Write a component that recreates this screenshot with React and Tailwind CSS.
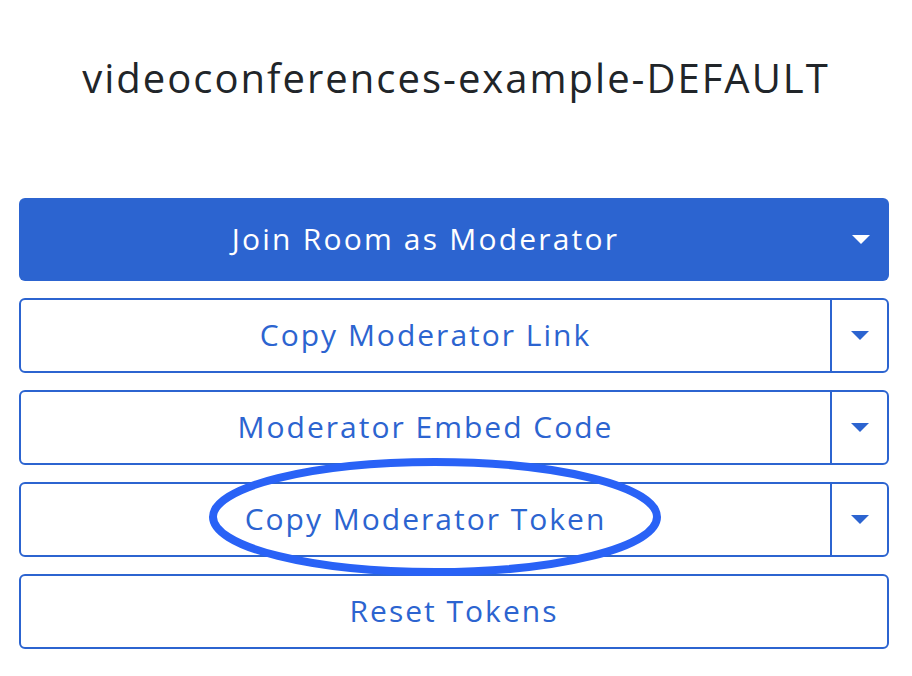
import React from 'react';

const blue = '#2c64d0';

function Caret({ color }) {
    return (
        <svg width="18" height="10" viewBox="0 0 18 10">
            <path d="M0 0 L18 0 L9 9 Z" fill={color} />
        </svg>
    );
}

function SplitButton({ label }) {
    return (
        <div className="flex h-[75px] rounded-md border-2 border-[#2c64d0] text-[#2c64d0]">
            <div className="flex-1 flex items-center justify-center text-[30px] tracking-[2px] pb-[3px]">{label}</div>
            <div className="w-[57px] border-l-2 border-[#2c64d0] flex items-center justify-center">
                <Caret color={blue} />
            </div>
        </div>
    );
}

export default function App() {
    return (
        <div className="w-[912px] h-[676px] bg-white relative" style={{ fontFamily: '"Open Sans", sans-serif' }}>
            <div className="pt-[48px] h-[198px] text-center text-[40px] tracking-[2px] text-[#212529]">
                videoconferences-example-DEFAULT
            </div>

            <div className="px-[19px] mr-[4px] flex flex-col gap-[17px]">
                <div className="flex h-[83px] rounded-md bg-[#2c64d0] text-white">
                    <div className="flex-1 flex items-center justify-center text-[30px] tracking-[2.2px] pb-[3px]">Join Room as Moderator</div>
                    <div className="w-[57px] flex items-center justify-center">
                        <Caret color="#ffffff" />
                    </div>
                </div>
                <SplitButton label="Copy Moderator Link" />
                <SplitButton label="Moderator Embed Code" />
                <SplitButton label="Copy Moderator Token" />
                <div className="flex h-[75px] rounded-md border-2 border-[#2c64d0] text-[#2c64d0] items-center justify-center text-[30px] tracking-[2px] pb-[3px]">
                    Reset Tokens
                </div>
            </div>

            <svg className="absolute left-0 top-0 pointer-events-none" width="912" height="676">
                <ellipse cx="435" cy="517" rx="222" ry="55" fill="none" stroke="#2962f6" strokeWidth="8" />
            </svg>
        </div>
    );
}
